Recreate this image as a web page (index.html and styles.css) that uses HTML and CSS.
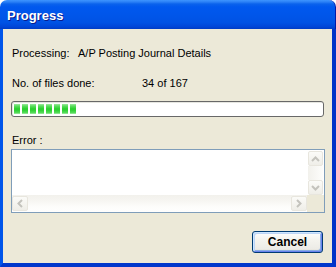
FILE: index.html
```html
<!DOCTYPE html>
<html>
<head>
<meta charset="utf-8">
<link rel="stylesheet" href="styles.css">
</head>
<body>
<div class="window">
  <div class="titlebar"><span class="title">Progress</span></div>
  <div class="frame">
    <div class="row row-processing">
      <span class="label">Processing:</span>
      <span class="value">A/P Posting Journal Details</span>
    </div>
    <div class="row row-files">
      <span class="label label-files">No. of files done:</span>
      <span class="value">34 of 167</span>
    </div>
    <div class="progress">
      <div class="progress-fill">
        <span class="block"></span><span class="block"></span><span class="block"></span><span class="block"></span>
        <span class="block"></span><span class="block"></span><span class="block"></span><span class="block"></span>
      </div>
    </div>
    <div class="row row-error"><span class="label">Error :</span></div>
    <div class="textbox">
      <div class="text-area"></div>
      <div class="vscroll">
        <div class="sbtn"><svg width="9" height="6" viewBox="0 0 9 6"><path d="M1 5 L4.5 1.5 L8 5" fill="none" stroke="#c4c3bd" stroke-width="2"/></svg></div>
        <div class="vtrack"></div>
        <div class="sbtn"><svg width="9" height="6" viewBox="0 0 9 6"><path d="M1 1 L4.5 4.5 L8 1" fill="none" stroke="#c4c3bd" stroke-width="2"/></svg></div>
      </div>
      <div class="hscroll">
        <div class="sbtn"><svg width="6" height="9" viewBox="0 0 6 9"><path d="M5 1 L1.5 4.5 L5 8" fill="none" stroke="#c4c3bd" stroke-width="2"/></svg></div>
        <div class="htrack"></div>
        <div class="sbtn"><svg width="6" height="9" viewBox="0 0 6 9"><path d="M1 1 L4.5 4.5 L1 8" fill="none" stroke="#c4c3bd" stroke-width="2"/></svg></div>
      </div>
      <div class="corner"></div>
    </div>
    <div class="buttons">
      <button class="btn">Cancel</button>
    </div>
  </div>
</div>
</body>
</html>
```

FILE: styles.css
```css
html, body {
  margin: 0;
  padding: 0;
  background: #ffffff;
}
.window {
  width: 336px;
  height: 267px;
  display: flex;
  flex-direction: column;
  font-family: "Liberation Sans", Arial, sans-serif;
  font-size: 11px;
  color: #000;
}
.titlebar {
  height: 29px;
  box-sizing: border-box;
  border-radius: 7px 7px 0 0;
  background: linear-gradient(to bottom, #3d95ff 0, #2a80f6 2px, #0a62ec 4px, #0058ee 7px, #0056ea 50%, #0052e4 78%, #0046d8 92%, #003cc4 100%);
  border-right: 1px solid #0019a8;
  display: flex;
  align-items: center;
  padding-left: 7px;
  padding-top: 1px;
}
.title {
  color: #fff;
  font-family: "Liberation Sans", Arial, sans-serif;
  font-weight: bold;
  font-size: 13px;
  text-shadow: 1px 1px 0 #0a1c8c;
}
.frame {
  flex: 1;
  background: #ece9d8;
  border-left: 3px solid #0055ea;
  border-right: 4px solid #0033c8;
  border-bottom: 4px solid #0037cc;
  padding: 0 8px 0 8px;
  display: flex;
  flex-direction: column;
}
.row {
  display: flex;
  height: 13px;
  line-height: 13px;
  padding-left: 1px;
}
.row-processing { margin-top: 18px; }
.row-files { margin-top: 17px; }
.row-error { margin-top: 17px; }
.label { width: 66px; }
.label-files { width: 130px; }
.progress {
  margin-top: 11px;
  height: 16px;
  box-sizing: border-box;
  border: 1px solid #686868;
  border-radius: 3px;
  background: #ffffff;
  box-shadow: inset 1px 1px 0 #e6e6e0;
  padding: 2px 2px;
}
.progress-fill {
  display: flex;
  gap: 2px;
  height: 10px;
}
.block {
  width: 6px;
  height: 10px;
  background: linear-gradient(to bottom, #9eeaa0 0, #5ddd60 20%, #2fd133 45%, #2bcf30 60%, #52da56 85%, #a4eca6 100%);
}
.textbox {
  margin-top: 2px;
  height: 64px;
  box-sizing: border-box;
  border: 1px solid #7f9db9;
  background: #ffffff;
  display: grid;
  grid-template-columns: 1fr 17px;
  grid-template-rows: 1fr 17px;
  margin-right: -1px;
}
.text-area { background: #fff; }
.vscroll {
  display: flex;
  flex-direction: column;
  padding: 1px 1px 0 1px;
}
.hscroll {
  display: flex;
  padding: 1px 0 1px 0;
  background: linear-gradient(to bottom, #f2f1ec 0, #f6f5f1 30%, #fdfdfb 70%, #fefefe 100%);
}
.corner { background: #ece9d8; }
.sbtn {
  width: 15px;
  height: 15px;
  box-sizing: border-box;
  border: 1px solid #e8e6de;
  border-radius: 2px;
  background: linear-gradient(to bottom, #fbfbf8, #efeee8);
  display: flex;
  align-items: center;
  justify-content: center;
  flex: none;
}
.hscroll .sbtn { width: 16px; }
.vtrack {
  flex: 1;
  background: linear-gradient(to right, #f2f1ec, #fdfdfb);
}
.htrack { flex: 1; }
.buttons {
  margin-top: 18px;
  display: flex;
  justify-content: flex-end;
  padding-right: 1px;
}
.btn {
  width: 71px;
  height: 22px;
  box-sizing: border-box;
  border: 1px solid #003c74;
  border-radius: 3px;
  background: linear-gradient(to bottom, #ffffff 0, #f4f3ee 40%, #ecebe6 85%, #d6d0c5 100%);
  box-shadow: inset 1px 1px 0 #cee7ff, inset -1px -1px 0 #6982ee, inset 2px 2px 0 #bcd4f6, inset -2px -2px 0 #89ade4;
  font-family: "Liberation Sans", Arial, sans-serif;
  font-weight: bold;
  font-size: 12px;
  color: #000;
  padding: 0;
}
```
